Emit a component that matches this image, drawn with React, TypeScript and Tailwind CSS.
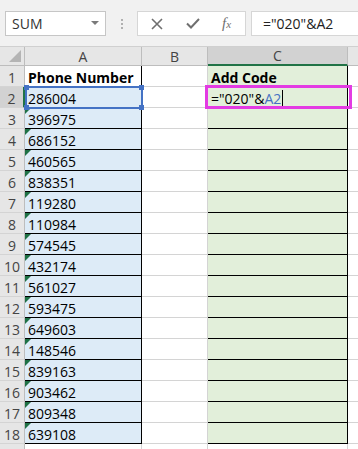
import React from "react";

const phones = [
  "286004", "396975", "686152", "460565", "838351", "119280", "110984", "574545",
  "432174", "561027", "593475", "649603", "148546", "839163", "903462", "809348", "639108",
];

const font = { fontFamily: '"Open Sans", "Liberation Sans", sans-serif' };

function RowHead({ n, active }: { n: number | string; active?: boolean }) {
  return (
    <div
      className={`w-[25px] shrink-0 h-full flex items-center justify-center pt-[2px] text-[14px] text-[#444] border-b border-[#d4d4d4] ${
        active ? "bg-[#d2d2d2] border-r-2 border-r-[#217346]" : "bg-[#e6e6e6] border-r border-r-[#bdbdbd]"
      }`}
    >
      {n}
    </div>
  );
}

function Triangle() {
  return (
    <svg className="absolute left-0 top-0" width="6" height="6" viewBox="0 0 6 6">
      <polygon points="0,0 6,0 0,6" fill="#1e7145" />
    </svg>
  );
}

export default function App() {
  return (
    <div className="w-[358px] h-[449px] overflow-hidden bg-white relative" style={font}>
      {/* Formula bar */}
      <div className="h-[47px] bg-[#f1f1f1] flex items-start pt-[11px] border-b border-[#d0d0d0]">
        <div className="ml-[5px] w-[101px] h-[25px] bg-white border border-[#c6c6c6] flex items-center pl-[6px] pr-[6px] text-[14px] text-[#333]">
          <span className="flex-1">SUM</span>
          <svg width="8" height="5" viewBox="0 0 8 5">
            <polygon points="0,0 8,0 4,4" fill="#7a7a7a" />
          </svg>
        </div>
        <div className="w-[31px] h-[25px] flex flex-col items-center justify-center gap-[2px]">
          <span className="w-[2px] h-[2px] bg-[#b0b0b0]" />
          <span className="w-[2px] h-[2px] bg-[#b0b0b0]" />
          <span className="w-[2px] h-[2px] bg-[#b0b0b0]" />
        </div>
        <div className="w-[109px] h-[25px] bg-white border border-[#d6d6d6] flex items-center">
          <svg className="ml-[13px]" width="12" height="12" viewBox="0 0 12 12">
            <path d="M1 1 L11 11 M11 1 L1 11" stroke="#6f6f6f" strokeWidth="1.6" />
          </svg>
          <svg className="ml-[23px]" width="14" height="11" viewBox="0 0 14 11">
            <path d="M1 5.5 L5 9.5 L13 1" stroke="#6f6f6f" strokeWidth="2" fill="none" />
          </svg>
          <span className="ml-[22px] text-[15px] italic text-[#6f6f6f]" style={{ fontFamily: '"Liberation Serif", serif' }}>
            f<span className="text-[11px]">x</span>
          </span>
        </div>
        <div className="ml-[5px] flex-1 h-[25px] bg-white border border-[#d6d6d6] border-r-0 flex items-center pl-[11px] text-[14px] text-[#222]">
          ="020"&amp;A2
        </div>
      </div>

      {/* Column headers */}
      <div className="h-[19px] flex bg-[#e6e6e6] text-[14px] text-[#444]">
        <div className="w-[25px] h-full border-r border-b border-[#bdbdbd] relative">
          <svg className="absolute right-[3px] bottom-[3px]" width="12" height="12" viewBox="0 0 12 12">
            <polygon points="12,0 12,12 0,12" fill="#b4b4b4" />
          </svg>
        </div>
        <div className="w-[117px] h-full flex items-center justify-center border-r border-b border-[#bdbdbd]">A</div>
        <div className="w-[66px] h-full flex items-center justify-center border-r border-b border-[#bdbdbd]">B</div>
        <div className="w-[140px] h-full flex items-center justify-center bg-[#d2d2d2] border-r border-r-[#bdbdbd] border-b-2 border-b-[#217346]">C</div>
        <div className="flex-1 h-full border-b border-[#bdbdbd]" />
      </div>

      {/* Row 1 */}
      <div className="h-[21px] flex text-[14px] text-black">
        <RowHead n={1} />
        <div className="w-[117px] h-full border-r border-b border-black flex items-center pt-[2px] pl-[3px] font-bold">Phone Number</div>
        <div className="w-[66px] h-full border-r border-b border-[#d4d4d4]" />
        <div className="w-[140px] h-full bg-[#e2efda] border-r border-b border-black flex items-center pt-[2px] pl-[3px] font-bold">Add Code</div>
        <div className="flex-1 h-full border-b border-[#d4d4d4]" />
      </div>

      {/* Row 2 */}
      <div className="h-[21px] flex text-[14px] text-black">
        <RowHead n={2} active />
        <div className="w-[117px] h-full bg-[#ddebf7] border-r border-b border-black flex items-center pt-[2px] pl-[3px]">286004</div>
        <div className="w-[66px] h-full border-r border-b border-[#d4d4d4]" />
        <div className="w-[140px] h-full bg-[#e2efda] border-r border-b border-black flex items-center pt-[2px] pl-[3px]">
          <span>="020"&amp;</span>
          <span className="text-[#4472c4]">A2</span>
          <span className="ml-[1px] w-px h-[16px] bg-black" />
        </div>
        <div className="flex-1 h-full border-b border-[#d4d4d4]" />
      </div>

      {/* Rows 3-18 */}
      {phones.slice(1).map((p, i) => (
        <div key={p} className="h-[21px] flex text-[14px] text-black">
          <RowHead n={i + 3} />
          <div className="w-[117px] h-full bg-[#ddebf7] border-r border-b border-black flex items-center pt-[2px] pl-[3px] relative">
            <Triangle />
            {p}
          </div>
          <div className="w-[66px] h-full border-r border-b border-[#d4d4d4]" />
          <div className="w-[140px] h-full bg-[#e2efda] border-r border-b border-black" />
          <div className="flex-1 h-full border-b border-[#d4d4d4]" />
        </div>
      ))}

      {/* Row 19 (partial) */}
      <div className="h-[21px] flex">
        <RowHead n="" />
        <div className="w-[117px] h-full border-r border-[#d4d4d4]" />
        <div className="w-[66px] h-full border-r border-[#d4d4d4]" />
        <div className="w-[140px] h-full border-r border-[#d4d4d4]" />
      </div>

      {/* A2 reference highlight */}
      <div className="absolute left-[25px] top-[86px] w-[118px] h-[23px] border-2 border-[#4472c4] pointer-events-none">
        <span className="absolute -left-[3px] -top-[3px] w-[5px] h-[5px] bg-[#4472c4]" />
        <span className="absolute -right-[3px] -top-[3px] w-[5px] h-[5px] bg-[#4472c4]" />
        <span className="absolute -left-[3px] -bottom-[3px] w-[5px] h-[5px] bg-[#4472c4]" />
        <span className="absolute -right-[3px] -bottom-[3px] w-[5px] h-[5px] bg-[#4472c4]" />
      </div>

      {/* Annotation box around C2 */}
      <div className="absolute left-[205px] top-[85px] w-[147px] h-[24px] border-[3px] border-[#e33be3] pointer-events-none" />
    </div>
  );
}
